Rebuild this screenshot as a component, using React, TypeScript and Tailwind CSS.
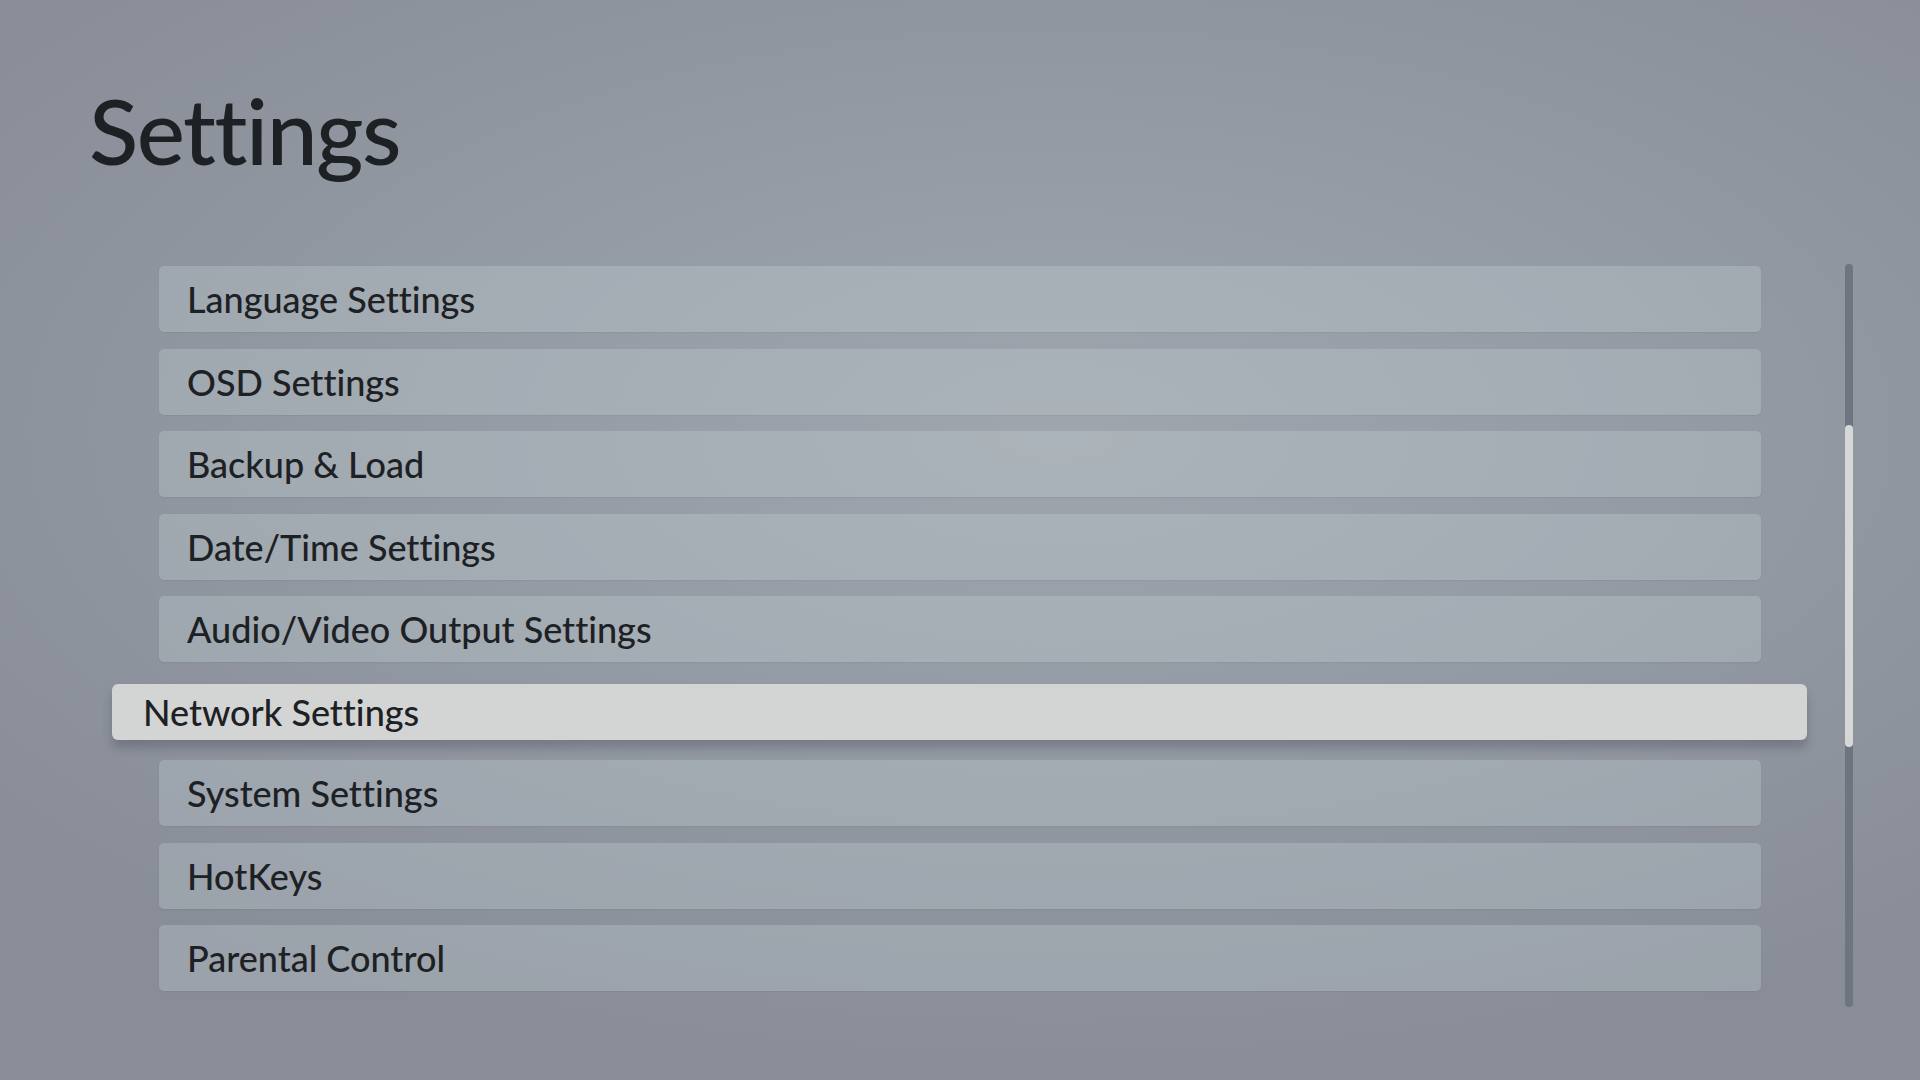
import React from "react";

const items = [
  "Language Settings",
  "OSD Settings",
  "Backup & Load",
  "Date/Time Settings",
  "Audio/Video Output Settings",
  "Network Settings",
  "System Settings",
  "HotKeys",
  "Parental Control",
];

const SELECTED = 5;

export default function App() {
  return (
    <div
      className="w-full h-[1080px] overflow-hidden bg-[radial-gradient(ellipse_70%_60%_at_55%_40%,#a0a6ae_0%,#959ba5_45%,#888d98_100%)] text-[#1e2124] [font-variant-ligatures:none]"
      style={{ fontFamily: "Lato, 'Open Sans', sans-serif" }}
    >
      <h1 className="pt-[84px] pl-[89px] text-[91px] leading-none font-medium tracking-[-1.5px]">
        Settings
      </h1>
      <div className="mt-[89px] flex flex-row items-start">
        <div className="flex flex-col gap-[16.5px] pt-[2px] pl-[112px] w-[1807px]">
          {items.map((label, i) =>
            i === SELECTED ? (
              <div
                key={label}
                className="mt-[5.5px] mb-[3.5px] h-[56px] w-[1695px] rounded-[6px] bg-[#d3d5d5] flex items-center pl-[31px] text-[36px] font-medium shadow-[0_8px_10px_rgba(40,45,55,0.25)]"
              >
                {label}
              </div>
            ) : (
              <div
                key={label}
                className="ml-[47px] h-[66px] w-[1602px] rounded-[5px] bg-[rgba(200,212,216,0.3)] flex items-center pl-[28px] text-[36px] font-medium shadow-[0_1px_2px_rgba(0,0,0,0.06)]"
              >
                {label}
              </div>
            )
          )}
        </div>
        <div className="ml-[38px] w-[8px] h-[743px] rounded-full bg-[#6e7580] flex flex-col">
          <div className="mt-[161px] h-[322px] w-[8px] rounded-full bg-[#d6d8d8]" />
        </div>
      </div>
    </div>
  );
}
